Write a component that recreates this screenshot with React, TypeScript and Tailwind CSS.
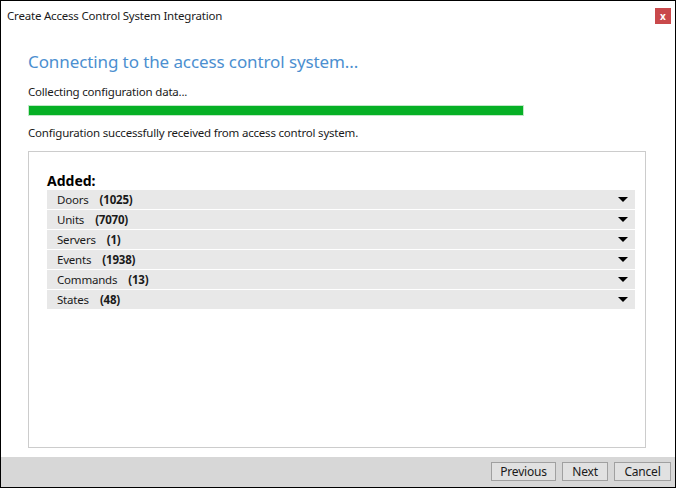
import React from "react";

const rows = [
  ["Doors", "1025"],
  ["Units", "7070"],
  ["Servers", "1"],
  ["Events", "1938"],
  ["Commands", "13"],
  ["States", "48"],
];

export default function App() {
  return (
    <div
      className="w-[676px] h-[488px] border border-black bg-white flex flex-col text-[11.5px] tracking-[-0.2px] text-[#1a1a1a] overflow-hidden"
      style={{ fontFamily: '"Segoe UI", "Noto Sans", "Open Sans", sans-serif' }}
    >
      <div className="h-[31px] flex items-start justify-between pl-[6px] pr-[4px]">
        <div className="mt-[7px] leading-[16px]">Create Access Control System Integration</div>
        <div className="mt-[7px] w-[16px] h-[16px] bg-[#c9494b] text-white flex items-center justify-center text-[10px] font-bold leading-none tracking-normal">
          x
        </div>
      </div>
      <div className="flex-1 flex flex-col pl-[27px] pr-[29px]">
        <div className="text-[17px] tracking-[-0.1px] text-[#4c8fd0] leading-[24px] mt-[20px]">
          Connecting to the access control system...
        </div>
        <div className="mt-[10px] leading-[16px]">Collecting configuration data...</div>
        <div className="mt-[5px] w-[496px] h-[11px] bg-[#06b025] border border-[#bfe8c6]" />
        <div className="mt-[9px] leading-[16px]">Configuration successfully received from access control system.</div>
        <div className="mt-[10px] h-[297px] border border-[#cccccc] pt-[20px] pl-[18px] pr-[10px]">
          <div className="text-[14px] font-bold text-black leading-[18px] tracking-normal">Added:</div>
          <div className="flex flex-col gap-px">
            {rows.map(([name, count]) => (
              <div key={name} className="h-[19px] bg-[#e8e8e8] flex items-center justify-between pl-[10px] pr-[7px]">
                <div className="leading-[16px]">
                  {name}
                  <span className="font-bold ml-[11px]">({count})</span>
                </div>
                <svg width="10" height="6" viewBox="0 0 10 6">
                  <polygon points="0,0 10,0 5,5" fill="#000" />
                </svg>
              </div>
            ))}
          </div>
        </div>
      </div>
      <div className="h-[31px] bg-[#d7d7d7] flex items-start justify-end gap-[6px] pr-[4px] pt-[5px] mt-[9px]">
        {["Previous", "Next", "Cancel"].map((b, i) => (
          <button
            key={b}
            className={`h-[19px] border border-[#a0a0a0] bg-[#e1e1e1] leading-[16px] text-[12px] tracking-[-0.2px] ${
              i === 0 ? "w-[65px]" : i === 1 ? "w-[46px]" : "w-[57px]"
            }`}
          >
            {b}
          </button>
        ))}
      </div>
    </div>
  );
}
